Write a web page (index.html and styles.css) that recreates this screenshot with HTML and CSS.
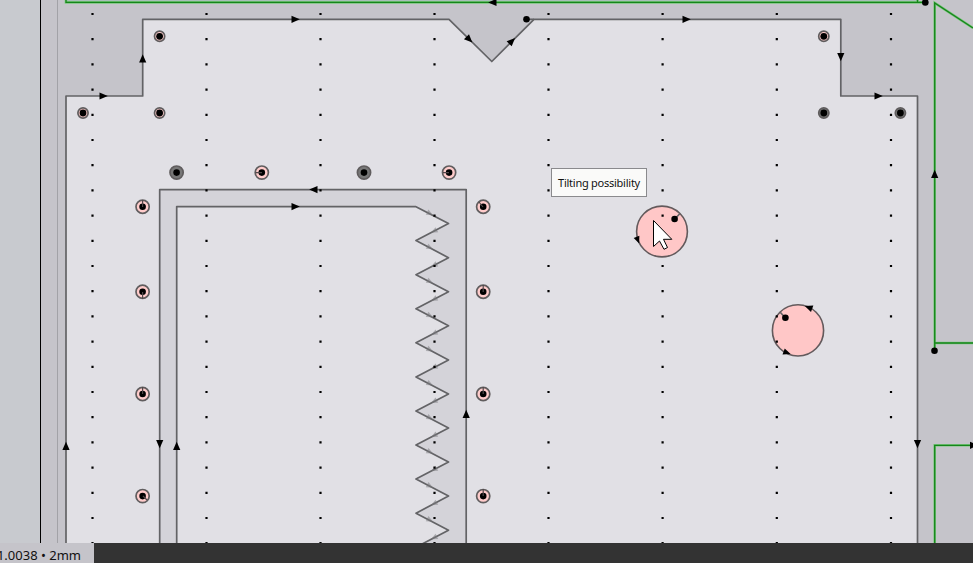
FILE: index.html
```html
<!DOCTYPE html>
<html lang="en">
<head>
<meta charset="utf-8">
<title>Cutting plan</title>
<link rel="stylesheet" href="styles.css">
</head>
<body>
<main class="workspace">
<svg class="drawing" viewBox="0 0 973 543" width="973" height="543">
  <defs>
    <path id="arrow" d="M-4-3.6 4.3 0-4 3.6Z"/>
    <g id="small"><circle class="hole" r="5.1"/><circle r="3.4"/></g>
    <g id="small-dark"><circle class="hole dark" r="5.1"/><circle r="3.4"/></g>
    <g id="hole"><circle class="hole" r="6.6"/><circle r="3.3"/></g>
    <g id="hole-dark"><circle class="hole dark" r="6.6"/><circle r="3.3"/></g>
  </defs>
  <rect class="outside" width="40" height="543"/>
  <path class="edge" d="M40.5 0V543"/>
  <path class="margin" d="M57.5 0V543"/>
  <path class="neighbour" d="M66 0H918V2H66Z"/>

  <path class="sheet line" d="M66 550V96H142.7V19.3H449L491.8 61.5 534 19.3H840.8V96H917.5V550"/>
  <path class="sash line" d="M159.7 550V189.6H466.2V550Z"/>
  <path class="sheet line" d="M176.7 550V206.6H415.5L448.5 223.6 416 240.6 448.5 257.7 416 274.7 448.5 291.7 416 308.8 448.5 325.8 416 342.8 448.5 359.9 416 376.9 448.5 393.9 416 411 448.5 428 416 445 448.5 462.1 416 479.1 448.5 496.1 416 513.2 448.5 530.2 416 547.2V550"/>
  <path class="line" d="M527 19.3H534"/>
  <g class="green-halo"><path d="M66 0V2.4H925M917.5 0V2.4M973 28 934.7 3V350M935 343H973M934.7 550V445.3H973"/></g>
  <g class="green"><path d="M66 0V2.4H925M917.5 0V2.4M973 28 934.7 3V350M935 343H973M934.7 550V445.3H973"/></g>

  <g class="disc"><circle cx="662" cy="231.5" r="25.4"/><circle cx="798" cy="330.4" r="25.6"/></g>
  <path class="line" d="M680 213.5 674.8 219M780 312 785.5 318"/>

  <g class="faint" id="tooth-marks"></g>
  <g class="grid">
    <path d="M92.5 12.9V543M206.5 12.9V543M320.5 12.9V543M434.5 12.9V543M548.5 12.9V543M662.6 12.9V543M776.8 12.9V543M891 12.9V543"/>
  </g>

  <use href="#small" x="159.6" y="36.3"/><use href="#small" x="83" y="113"/><use href="#small" x="159.6" y="113"/>
  <use href="#small" x="823.8" y="36.3"/><use href="#small-dark" x="823.8" y="113"/><use href="#small-dark" x="900.4" y="113"/>
  <use href="#hole-dark" x="176.6" y="172.6"/><use href="#hole" x="261.8" y="172.6"/>
  <use href="#hole-dark" x="364" y="172.6"/><use href="#hole" x="449.1" y="172.6"/>
  <use href="#hole" x="142.6" y="206.7"/><use href="#hole" x="142.6" y="291.8"/><use href="#hole" x="142.6" y="394"/><use href="#hole" x="142.6" y="496.1"/>
  <use href="#hole" x="483.2" y="206.7"/><use href="#hole" x="483.2" y="291.8"/><use href="#hole" x="483.2" y="394"/><use href="#hole" x="483.2" y="496.1"/>
  <path class="tick" d="M255.5 172.6H262M443 172.6H449M142.6 200V207M142.6 292V299M142.6 394V387M143 496 147 500M479 202 483 207M483.2 285V292M483.2 387V394M483.2 489V496"/>
  <circle cx="526.5" cy="19.3" r="3.3"/><circle cx="925.3" cy="2.4" r="3.3"/><circle cx="934.5" cy="350.7" r="3.3"/>
  <circle cx="674.6" cy="219" r="3.3"/><circle cx="785.4" cy="317.8" r="3.3"/>

  <use href="#arrow" transform="translate(103.5 96)"/><use href="#arrow" transform="translate(295.5 19.3)"/>
  <use href="#arrow" transform="translate(686.5 19.3)"/><use href="#arrow" transform="translate(878.5 96)"/>
  <use href="#arrow" transform="translate(295.5 206.6)"/><use href="#arrow" transform="translate(974 445.3)"/>
  <use href="#arrow" transform="translate(142.7 58.5) rotate(-90)"/><use href="#arrow" transform="translate(840.8 57) rotate(90)"/>
  <use href="#arrow" transform="translate(469.3 39.5) rotate(45)"/><use href="#arrow" transform="translate(512 41) rotate(-45)"/>
  <use href="#arrow" transform="translate(492.5 2.4) rotate(180)"/><use href="#arrow" transform="translate(313.5 189.6) rotate(180)"/>
  <use href="#arrow" transform="translate(66 446) rotate(-90)"/><use href="#arrow" transform="translate(176.7 446) rotate(-90)"/>
  <use href="#arrow" transform="translate(466.2 414) rotate(-90)"/><use href="#arrow" transform="translate(934.7 174) rotate(-90)"/>
  <use href="#arrow" transform="translate(159.7 444) rotate(90)"/><use href="#arrow" transform="translate(917.5 444) rotate(90)"/>
  <use href="#arrow" transform="translate(637.8 240) rotate(68) scale(.85)"/>
  <use href="#arrow" transform="translate(808.6 307.5) rotate(200) scale(.95)"/><use href="#arrow" transform="translate(787 352.8) rotate(20) scale(.9)"/>

  <path class="cursor" d="M653.5 220.5V246.5L659.5 241 664 249.3 667.5 247.5 663.5 239.3H671.8Z"/>
</svg>
<div class="tooltip">Tilting possibility</div>
</main>
<footer class="bar"><div class="status"><span>1.0038 • 2mm</span></div></footer>
<script src="marks.js"></script>
</body>
</html>
```
FILE: styles.css
```css
* { box-sizing: border-box; }
body {
  margin: 0;
  height: 563px;
  display: flex;
  flex-direction: column;
  overflow: hidden;
  background: #c5c4ca;
  color: #111;
  font-family: "Noto Sans", "Open Sans", sans-serif;
}
.workspace { position: relative; height: 543px; overflow: hidden; }
.drawing { display: block; }
.outside { fill: #c8cacf; }
.edge { stroke: #000; stroke-width: 1; }
.margin { stroke: #a2a2a7; stroke-width: 1; }
.neighbour { fill: #a9bfb8; }
.line { stroke: #636366; stroke-width: 1.7; fill: none; stroke-linejoin: round; }
.sheet { fill: #e1e0e5; }
.sash { fill: #d4d3d9; }
.green-halo { fill: none; stroke: #79c77c; stroke-width: 2.6; }
.green { fill: none; stroke: #16851b; stroke-width: 1.3; }
.disc { fill: #ffc7c7; stroke: #635a5c; stroke-width: 1.6; }
.hole { fill: #ffcccb; stroke: #605d5e; stroke-width: 1.7; }
.dark { fill: #777; }
.tick { stroke: #51484a; stroke-width: 1.2; }
.grid { fill: none; stroke: #000; stroke-width: 2.2; stroke-dasharray: 2.2 23; }
.faint { fill: #77777b; opacity: .5; }
.cursor { fill: #fff; stroke: #000; stroke-width: 1; }
.tooltip {
  position: absolute;
  left: 551px;
  top: 168px;
  width: 96px;
  height: 29px;
  border: 1px solid #8a8a8d;
  background: #fafaf9;
  font-size: 11px;
  line-height: 28px;
  text-align: center;
  white-space: nowrap;
  letter-spacing: -.25px;
}
.bar { display: flex; height: 20px; background: #333; }
.status {
  display: flex;
  justify-content: flex-end;
  width: 94px;
  padding-right: 13px;
  overflow: hidden;
  background: #c5c4ca;
  font-size: 13px;
  line-height: 25px;
  white-space: nowrap;
}
```
FILE: marks.js
```js
// Direction marks halfway along every side of the saw-tooth edge.
const marks = document.getElementById("tooth-marks");
for (let i = 0; i < 20; i++) {
  const mark = document.createElementNS("http://www.w3.org/2000/svg", "use");
  mark.setAttribute("href", "#arrow");
  const x = i % 2 ? 434 : 430;
  const y = 206.6 + 17.03 * i + (i % 2 ? 7.6 : 7);
  mark.setAttribute("transform", `translate(${x} ${y}) rotate(${i % 2 ? 153 : 27}) scale(.8)`);
  marks.append(mark);
}
```
